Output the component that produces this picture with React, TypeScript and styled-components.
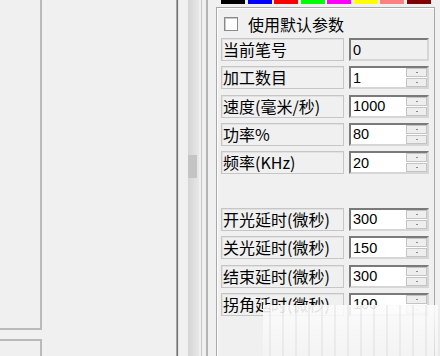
import React from "react";
import styled, { createGlobalStyle } from "styled-components";

const Global = createGlobalStyle`
  html, body { margin: 0; padding: 0; background: #f0f0f0; }
  body { width: 440px; height: 356px; overflow: hidden; }
`;

const Screen = styled.div`
  position: relative;
  display: flex;
  width: 440px;
  height: 356px;
  background: #f0f0f0;
  overflow: hidden;
  font-family: "Noto Sans CJK SC", "Noto Sans", sans-serif;
  color: #000;
`;

const LeftCol = styled.div`
  flex: none;
  width: 42px;
  display: flex;
  flex-direction: column;
  gap: 9px;
`;

const LeftBox = styled.div<{ $pos: "top" | "bottom" }>`
  box-sizing: border-box;
  border-right: 2px solid #b9b9b9;
  ${(p) =>
    p.$pos === "top"
      ? "height: 330px; border-bottom: 2px solid #b9b9b9;"
      : "flex: 1; border-top: 2px solid #b9b9b9;"}
`;

const Middle = styled.div`
  flex: none;
  width: 134px;
`;

const Splitter = styled.div`
  flex: none;
  width: 3px;
  background: linear-gradient(to right, #a4a4a4 0 1px, #707070 1px 2px, #e6e6e6 2px 3px);
`;

const Rule = styled.div<{ $w: number; $ml: number; $c: string }>`
  flex: none;
  width: ${(p) => p.$w}px;
  margin-left: ${(p) => p.$ml}px;
  background: ${(p) => p.$c};
`;

const ScrollTrack = styled.div`
  flex: none;
  width: 11px;
  margin-left: 9px;
  display: flex;
  flex-direction: column;
  padding-top: 155px;
  box-sizing: border-box;
  background: linear-gradient(to right, #d4d4d4, #dcdcdc 40%, #e8e8e8);
`;

const Thumb = styled.div`
  width: 9px;
  height: 23px;
  background: #c4c4c4;
`;

const RightPanel = styled.div`
  flex: none;
  width: 219px;
  margin-left: 8px;
  display: flex;
  flex-direction: column;
`;

const Swatches = styled.div`
  display: grid;
  grid-template-columns: repeat(8, 1fr);
  column-gap: 2.5px;
  height: 4px;
  margin: 0 4px 0 5px;
`;

const Swatch = styled.div<{ $c: string }>`
  background: ${(p) => p.$c};
`;

const Frame = styled.div`
  flex: 1;
  margin-top: 3px;
  border: 1px solid #a8a8a8;
  border-bottom: none;
  box-shadow: inset 1px 1px #ffffff;
  padding: 5px 4px 0 4px;
  display: flex;
  flex-direction: column;
`;

const CheckRow = styled.label`
  display: flex;
  align-items: center;
  height: 22px;
  margin-bottom: 3px;
  font-size: 16px;
  line-height: 22px;
`;

const CheckBox = styled.span`
  box-sizing: border-box;
  width: 14px;
  height: 14px;
  margin-left: 3px;
  margin-right: 10px;
  background: #fff;
  border: 1px solid #8a8a8a;
  box-shadow: inset 1px 1px #c8c8c8;
`;

const Rows = styled.div`
  display: flex;
  flex-direction: column;
  gap: 5.33px;
`;

const Row = styled.div`
  display: grid;
  grid-template-columns: 123px 80px;
  column-gap: 5px;
  height: 23px;
`;

const Spacer = styled.div`
  height: 23px;
`;

const Label = styled.div`
  box-sizing: border-box;
  height: 23px;
  border: 1px solid #c6c6c6;
  box-shadow: inset 1px 1px #e2e2e2;
  padding-left: 1px;
  font-size: 16px;
  line-height: 21px;
  white-space: nowrap;
  overflow: hidden;
`;

const Field = styled.div<{ $readOnly?: boolean }>`
  box-sizing: border-box;
  height: 23px;
  display: flex;
  align-items: center;
  border-top: 2px solid #7a7a7a;
  border-left: 2px solid #7a7a7a;
  border-right: 2px solid #d6d6d6;
  border-bottom: 2px solid #d6d6d6;
  background: ${(p) => (p.$readOnly ? "#f0f0f0" : "#ffffff")};
  padding-left: 2px;
  font-family: "Liberation Sans", "Noto Sans", sans-serif;
  font-size: 14.5px;
`;

const FieldText = styled.span`
  flex: 1;
`;

const Spin = styled.div`
  flex: none;
  width: 21px;
  height: 19px;
  display: flex;
  flex-direction: column;
  gap: 1px;
`;

const SpinBtn = styled.div`
  flex: 1;
  box-sizing: border-box;
  border: 1px solid #c4c4c4;
  background: #eeeeee;
  display: flex;
  align-items: center;
  justify-content: center;
  &::after {
    content: "";
    width: 2px;
    height: 1px;
    background: #8a8a8a;
  }
`;

const Watermark = styled.div`
  position: absolute;
  left: 263px;
  top: 305px;
  right: 0;
  bottom: 0;
  background:
    repeating-linear-gradient(
      to right,
      rgba(255, 255, 255, 0) 0 6px,
      rgba(200, 200, 200, 0.25) 6px 8px,
      rgba(255, 255, 255, 0) 8px 13px
    ),
    linear-gradient(to bottom, rgba(252, 252, 252, 0.92), rgba(246, 246, 246, 0.6));
`;

const swatchColors = ["#000000", "#0000ff", "#ff0000", "#00ff00", "#ff00ff", "#ffff00", "#ff8080", "#800000"];

type Item = { label: string; value: string; readOnly?: boolean } | null;

const items: Item[] = [
  { label: "当前笔号", value: "0", readOnly: true },
  { label: "加工数目", value: "1" },
  { label: "速度(毫米/秒)", value: "1000" },
  { label: "功率%", value: "80" },
  { label: "频率(KHz)", value: "20" },
  null,
  { label: "开光延时(微秒)", value: "300" },
  { label: "关光延时(微秒)", value: "150" },
  { label: "结束延时(微秒)", value: "300" },
  { label: "拐角延时(微秒)", value: "100" },
];

export default function App() {
  return (
    <Screen>
      <Global />
      <LeftCol>
        <LeftBox $pos="top" />
        <LeftBox $pos="bottom" />
      </LeftCol>
      <Middle />
      <Splitter />
      <ScrollTrack>
        <Thumb />
      </ScrollTrack>
      <Rule $w={1} $ml={2} $c="#c8c8c8" />
      <Rule $w={2} $ml={4} $c="#b4b4b4" />
      <RightPanel>
        <Swatches>
          {swatchColors.map((c) => (
            <Swatch key={c} $c={c} />
          ))}
        </Swatches>
        <Frame>
          <CheckRow>
            <CheckBox />
            使用默认参数
          </CheckRow>
          <Rows>
            {items.map((it, i) =>
              it ? (
                <Row key={i}>
                  <Label>{it.label}</Label>
                  <Field $readOnly={it.readOnly}>
                    <FieldText>{it.value}</FieldText>
                    {!it.readOnly && (
                      <Spin>
                        <SpinBtn />
                        <SpinBtn />
                      </Spin>
                    )}
                  </Field>
                </Row>
              ) : (
                <Spacer key={i} />
              )
            )}
          </Rows>
        </Frame>
      </RightPanel>
      <Watermark />
    </Screen>
  );
}
